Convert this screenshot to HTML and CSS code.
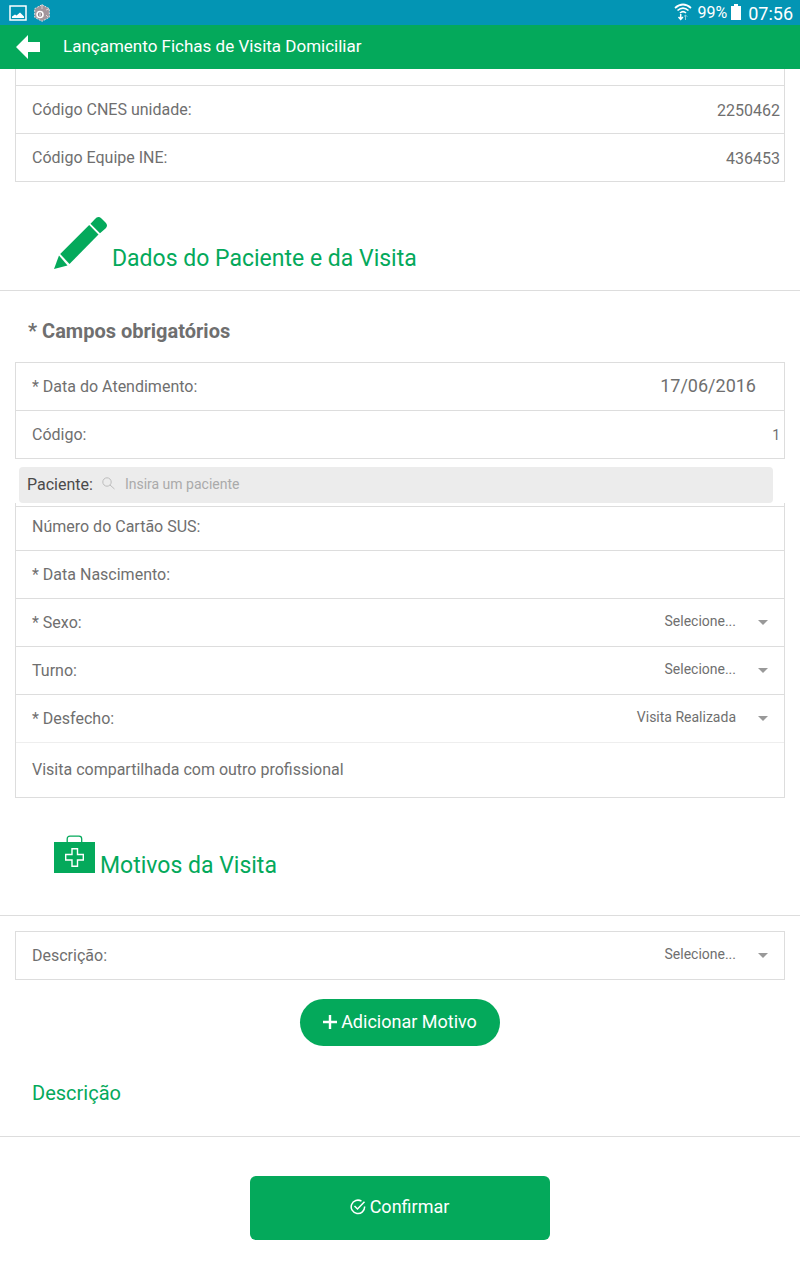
FILE: index.html
```html
<!DOCTYPE html>
<html lang="pt-BR">
<head>
    <meta charset="UTF-8">
    <meta name="viewport" content="width=device-width, initial-scale=1.0">
    <title>Lançamento Fichas de Visita Domiciliar</title>
    <link rel="stylesheet" href="styles.css">
</head>
<body>
    <div class="status-bar">
        <div class="status-left">
            <svg width="18" height="16" viewBox="0 0 18 16">
                <rect x="1" y="1" width="16" height="14" fill="none" stroke="#fff" stroke-width="1.500"/>
                <path d="M3 13V11.500L6 9.500L7.500 10.500L11 7.500L15 11.500V13Z" fill="#fff"/>
            </svg>
            <svg width="16" height="18" viewBox="0 0 16 18">
                <path d="M8 .7L15.300 4.700V13.300L8 17.300L.7 13.300V4.700Z" fill="#a3969c" stroke="#e3dfe1" stroke-width="1" stroke-dasharray="2 1"/>
                <path d="M8 1V5M12 6L15 5M12 11L14 13" stroke="#d8d0d4"/>
                <circle cx="6" cy="10.500" r="3" fill="#8b7f85" stroke="#fff" stroke-width="1.600"/>
                <path d="M6 9V12" stroke="#fff"/>
            </svg>
        </div>
        <div class="status-right">
            <svg class="wifi" width="18" height="18" viewBox="0 0 18 18" fill="none" stroke="#fff">
                <path d="M1 5Q9 -2 17 5" stroke-width="1.700"/>
                <path d="M3.500 7.500Q9 2.600 14.500 7.500" stroke-width="1.600"/>
                <path d="M6 10Q9 7.400 12 10" stroke-width="1.600"/>
                <path d="M6.700 11V16M4.500 14L6.700 16.300L8.900 14" stroke-width="1.500"/>
                <path d="M11.500 17V12M9.800 13.700L11.500 12L13.200 13.700" stroke="#8fd0df"/>
            </svg>
            <span class="battery-text">99%</span>
            <svg class="battery" width="10" height="16" viewBox="0 0 10 16">
                <path d="M3 0H7V2H10V16H0V2H3Z" fill="#fff"/>
            </svg>
            <span class="clock">07:56</span>
        </div>
    </div>

    <div class="header">
        <svg width="24" height="24" viewBox="0 0 24 24">
            <path d="M0 12L12 0V7H24V17H12V24Z" fill="#fff"/>
        </svg>
        <span>Lançamento Fichas de Visita Domiciliar</span>
    </div>

    <div class="list list-cut">
        <div class="item item-cut"></div>
        <div class="item"><label>Código CNES unidade:</label><span class="value">2250462</span></div>
        <div class="item"><label>Código Equipe INE:</label><span class="value">436453</span></div>
    </div>

    <div class="section-title">
        <svg width="54" height="54" viewBox="0 0 54 54" fill="#04a95b">
            <path d="M0 53L5 39.500L13.500 49.500Z"/>
            <path d="M6.200 38L35.200 9L44.500 18.500L15.500 48Z"/>
            <path d="M36.500 7.700L41 3Q44 -.5 47.500 2.500L51.500 6.500Q54.500 9.500 51.500 12.500L46 17.300Z"/>
        </svg>
        <h2>Dados do Paciente e da Visita</h2>
    </div>

    <h3 class="required">* Campos obrigatórios</h3>

    <div class="list">
        <div class="item"><label>* Data do Atendimento:</label><span class="value date">17/06/2016</span></div>
        <div class="item"><label>Código:</label><span class="value code">1</span></div>
    </div>

    <div class="search">
        <label>Paciente:</label>
        <svg width="13" height="13" viewBox="0 0 13 13" fill="none" stroke="#bdbdbd">
            <circle cx="5" cy="5" r="4.200"/>
            <path d="M8 8L12.500 12"/>
        </svg>
        <span class="placeholder">Insira um paciente</span>
    </div>

    <div class="list list-cut">
        <div class="item item-gap"></div>
        <div class="item item-short"><label>Número do Cartão SUS:</label></div>
        <div class="item"><label>* Data Nascimento:</label></div>
        <div class="item"><label>* Sexo:</label><span class="select">Selecione...</span></div>
        <div class="item"><label>Turno:</label><span class="select">Selecione...</span></div>
        <div class="item item-light"><label>* Desfecho:</label><span class="select">Visita Realizada</span></div>
        <div class="item item-tall"><label>Visita compartilhada com outro profissional</label></div>
    </div>

    <div class="section-title section-reasons">
        <svg width="42" height="39" viewBox="0 0 42 39">
            <path d="M13.200 8V4Q13.200 1.200 16 1.200H25Q27.700 1.200 27.700 4V8" fill="none" stroke="#04a95b" stroke-width="1.300"/>
            <rect y="7" width="41" height="31" fill="#04a95b"/>
            <path d="M18 13.700H23.500V19.500H29.300V25H23.500V31.300H18V25H11.700V19.500H18Z" fill="none" stroke="#fff" stroke-width="1.400"/>
        </svg>
        <h2>Motivos da Visita</h2>
    </div>

    <div class="list reasons">
        <div class="item"><label>Descrição:</label><span class="select">Selecione...</span></div>
    </div>

    <button class="button button-add">
        <svg width="14" height="14" viewBox="0 0 14 14"><path d="M7 0V14M0 7H14" stroke="#fff" stroke-width="2.400"/></svg>
        Adicionar Motivo
    </button>

    <h4 class="description">Descrição</h4>

    <button class="button button-confirm">
        <svg width="16" height="16" viewBox="0 0 16 16" fill="none" stroke="#fff" stroke-width="1.500">
            <path d="M11.500 2.200A6.700 6.700 0 1 0 14.600 7.500"/>
            <path d="M4.500 7L7.500 10L14.500 2.800"/>
        </svg>
        Confirmar
    </button>
</body>
</html>
```
FILE: styles.css
```css
* {
    box-sizing: border-box;
}
body {
    margin: 0;
    font-family: Roboto, sans-serif;
    font-size: 16px;
    color: #6f6f6f;
    background: #fff;
}
h2, h3, h4 {
    margin: 0;
}
svg {
    display: block;
    flex-shrink: 0;
}
.status-bar {
    display: flex;
    justify-content: space-between;
    height: 25px;
    padding: 0 8px 0 9px;
    background: #0395b4;
    color: #fff;
}
.status-left, .status-right {
    display: flex;
    align-items: center;
}
.status-left {
    gap: 7px;
}
.wifi {
    margin-bottom: 2px;
}
.battery-text {
    margin-left: 5px;
}
.battery {
    margin: 0 7px 1px 4px;
}
.clock {
    font-size: 18px;
    padding-top: 2px;
    margin-right: -1px;
}
.header {
    display: flex;
    align-items: center;
    gap: 23px;
    height: 44px;
    padding-left: 16px;
    background: #04a95b;
    color: #fff;
    font-size: 17px;
}
.header span {
    padding-bottom: 2px;
}
.list {
    margin: 0 15px;
    border: 1px solid #ddd;
    border-bottom: none;
}
.list-cut {
    border-top: none;
}
.item {
    display: flex;
    align-items: center;
    justify-content: space-between;
    height: 48px;
    padding: 0 4px 0 16px;
    border-bottom: 1px solid #ddd;
}
.item-cut {
    height: 17px;
}
.item-gap {
    height: 4px;
}
.item-short {
    height: 44px;
    padding-bottom: 4px;
}
.item-light {
    border-bottom-color: #eee;
}
.item-tall {
    height: 55px;
    padding-bottom: 2px;
}
.value {
    padding-top: 2px;
}
.date {
    padding: 0 24px 2px 0;
    font-size: 18px;
}
.code {
    padding-top: 0;
    font-size: 14px;
}
.select {
    display: flex;
    align-items: center;
    gap: 22px;
    padding: 0 12px 3px 0;
    font-size: 14px;
}
.select::after {
    content: "";
    margin-top: 3px;
    border: 5px solid transparent;
    border-top-color: #999;
    border-bottom: none;
}
.section-title {
    display: flex;
    align-items: flex-end;
    gap: 4px;
    height: 109px;
    padding: 0 0 20px 54px;
    border-bottom: 1px solid #ddd;
    color: #04a95b;
}
.section-title h2 {
    margin-bottom: -2px;
    font-size: 23px;
    font-weight: 400;
    line-height: 27px;
}
.section-reasons {
    height: 118px;
    padding-bottom: 41px;
}
.section-reasons h2 {
    margin-bottom: -5px;
}
.required {
    height: 71px;
    padding: 28px 0 0 28px;
    font-size: 20px;
    line-height: 24px;
}
.search {
    display: flex;
    align-items: center;
    height: 36px;
    margin: 8px 27px 0 19px;
    padding: 0 0 2px 8px;
    border-radius: 4px;
    background: #ececec;
}
.search label {
    color: #4a4a4a;
}
.search svg {
    margin: 0 10px 2px 9px;
}
.placeholder {
    color: #aaa;
    font-size: 14px;
}
.reasons {
    margin-top: 15px;
}
.button {
    display: flex;
    align-items: center;
    justify-content: center;
    gap: 4px;
    margin: 0 auto;
    padding: 0 0 2px;
    border: none;
    background: #04a95b;
    color: #fff;
    font-family: inherit;
    font-size: 18px;
}
.button-add {
    width: 200px;
    height: 47px;
    margin-top: 19px;
    border-radius: 24px;
}
.description {
    height: 91px;
    padding: 35px 0 0 32px;
    border-bottom: 1px solid #ddd;
    color: #04a95b;
    font-size: 20px;
    font-weight: 400;
    line-height: 24px;
}
.button-confirm {
    width: 300px;
    height: 64px;
    margin-top: 39px;
    padding: 0 1px 3px 0;
    border-radius: 6px;
}
```
